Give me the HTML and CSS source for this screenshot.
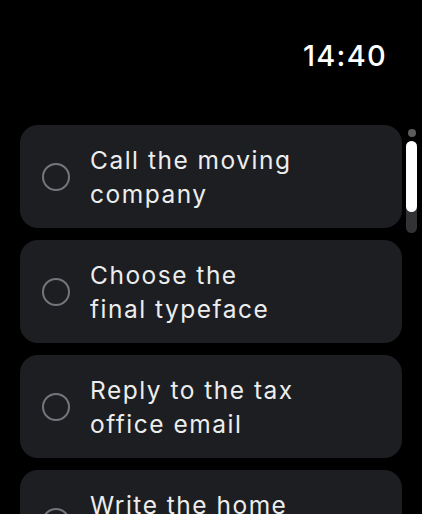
FILE: index.html
```html
<!DOCTYPE html>
<html lang="en">
<head>
  <meta charset="UTF-8">
  <title>Reminders</title>
  <link rel="stylesheet" href="styles.css">
</head>
<body>
  <!-- top bar with clock -->
  <header class="top-bar">
    <span class="clock">14:40</span>
  </header>

  <!-- task list -->
  <main class="task-list">
    <div class="task-card">
      <span class="check"></span>
      <span class="task-title">Call the moving company</span>
    </div>
    <div class="task-card">
      <span class="check"></span>
      <span class="task-title">Choose the final typeface</span>
    </div>
    <div class="task-card">
      <span class="check"></span>
      <span class="task-title">Reply to the tax office email</span>
    </div>
    <div class="task-card">
      <span class="check"></span>
      <span class="task-title">Write the home inventory list</span>
    </div>
  </main>

  <!-- scroll indicator -->
  <div class="scroll-indicator">
    <span class="scroll-dot"></span>
    <span class="scroll-track"><span class="scroll-thumb"></span></span>
  </div>
</body>
</html>
```

FILE: styles.css
```css
* {
  box-sizing: border-box;
}

html,
body {
  height: 100%;
  overflow: hidden;
}

body {
  margin: 0;
  background-color: #000;
  color: #ededed;
  font-family: Inter, "Noto Sans", sans-serif;
  position: relative;
}

.top-bar {
  display: flex;
  justify-content: flex-end;
  padding: 38px 35px 0 0;
  height: 125px;
}

.clock {
  font-size: 29px;
  font-weight: 500;
  letter-spacing: 1.3px;
  line-height: 36px;
  color: #fff;
}

.task-list {
  display: flex;
  flex-direction: column;
  gap: 12px;
  padding: 0 20px;
}

.task-card {
  display: flex;
  align-items: center;
  gap: 20px;
  height: 103px;
  flex-shrink: 0;
  padding-left: 22px;
  background-color: #1c1e22;
  border-radius: 18px;
}

.check {
  width: 28px;
  height: 28px;
  flex-shrink: 0;
  border: 2px solid #74767b;
  border-radius: 50%;
}

.task-title {
  max-width: 208px;
  font-size: 24.5px;
  line-height: 34px;
  letter-spacing: 1.5px;
}

/* scroll indicator sits over the right edge */
.scroll-indicator {
  position: absolute;
  top: 129px;
  right: 5px;
  display: flex;
  flex-direction: column;
  align-items: center;
  gap: 4px;
}

.scroll-dot {
  width: 8px;
  height: 8px;
  border-radius: 50%;
  background-color: #5c5c5e;
}

.scroll-track {
  width: 11px;
  height: 92px;
  border-radius: 6px;
  background-color: #333335;
}

.scroll-thumb {
  display: block;
  width: 11px;
  height: 71px;
  border-radius: 6px;
  background-color: #fff;
}
```
